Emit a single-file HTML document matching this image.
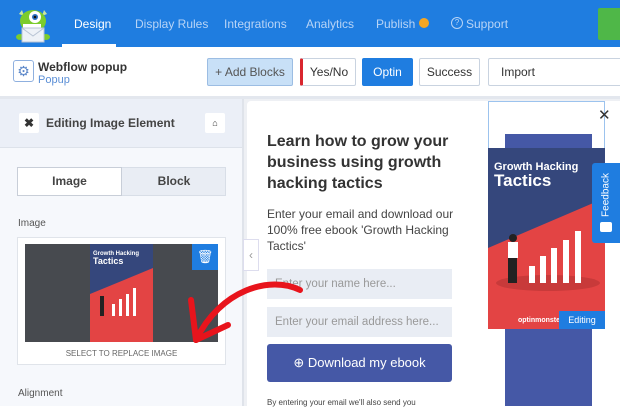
<!DOCTYPE html>
<html><head><style>
*{margin:0;padding:0;box-sizing:border-box}
body{width:620px;height:406px;overflow:hidden;font-family:"Liberation Sans",sans-serif;background:#fff;position:relative}
.a{position:absolute}
.nav{left:0;top:0;width:620px;height:47px;background:#1f7de0}
.nt{top:17px;font-size:12px;color:#b8d4f6}
.btn{top:58px;height:28px;border:1px solid #c9d3e0;border-radius:2px;font-size:12px;text-align:center;line-height:26px;color:#333;background:#fff}
</style></head><body>
<div class="a nav"></div>
<svg class="a" style="left:13px;top:4px" width="40" height="40" viewBox="0 0 40 40">
<path d="M6 10 L9 6 L11 12Z M34 10 L31 6 L29 12Z" fill="#c9e6a0"/>
<ellipse cx="20" cy="17" rx="13" ry="11" fill="#7ccc2c"/>
<circle cx="22" cy="13" r="6" fill="#fff"/><circle cx="22" cy="13" r="3" fill="#2a6fc0"/><circle cx="22" cy="13" r="1.3" fill="#111"/>
<rect x="10" y="20" width="18" height="4" fill="#fff"/>
<ellipse cx="7" cy="33" rx="4" ry="3" fill="#7ccc2c"/><ellipse cx="33" cy="33" rx="4" ry="3" fill="#7ccc2c"/>
<path d="M9 24 L31 24 L31 38 L9 38Z" fill="#eef2f7" stroke="#b8c4d4"/>
<path d="M9 24 L20 32 L31 24" fill="none" stroke="#b8c4d4"/>
</svg>
<div class="a" style="left:62px;top:44px;width:54px;height:3px;background:#fff"></div>
<div class="a nt" style="left:74px;color:#fff">Design</div>
<div class="a nt" style="left:135px">Display Rules</div>
<div class="a nt" style="left:224px">Integrations</div>
<div class="a nt" style="left:306px">Analytics</div>
<div class="a nt" style="left:376px">Publish</div>
<div class="a" style="left:419px;top:18px;width:10px;height:10px;border-radius:50%;background:#f5a623"></div>
<div class="a" style="left:451px;top:17px;width:12px;height:12px;border:1px solid #b8d4f6;border-radius:50%;font-size:8px;color:#b8d4f6;text-align:center;line-height:10px">?</div>
<div class="a nt" style="left:466px">Support</div>
<div class="a" style="left:598px;top:8px;width:22px;height:32px;background:#4fb748;border-radius:2px 0 0 2px"></div>

<div class="a" style="left:0;top:96px;width:620px;height:3px;background:#e3e7ee"></div>
<div class="a" style="left:13px;top:60px;width:21px;height:22px;border:1px solid #8fb0df;border-radius:3px;color:#5a86c8;font-size:14px;text-align:center;line-height:20px">⚙</div>
<div class="a" style="left:38px;top:60px;font-size:12px;font-weight:bold;color:#333">Webflow popup</div>
<div class="a" style="left:38px;top:74px;font-size:11px;color:#5b8fd6">Popup</div>
<div class="a btn" style="left:207px;width:86px;background:#c8e0f7;border-color:#9cbde3;color:#555">+ Add Blocks</div>
<div class="a btn" style="left:300px;width:56px;border-left:3px solid #d9262e">Yes/No</div>
<div class="a btn" style="left:362px;width:51px;background:#1f7de0;border-color:#1f7de0;color:#fff">Optin</div>
<div class="a btn" style="left:419px;width:61px">Success</div>
<div class="a btn" style="left:488px;width:140px;text-align:left;padding-left:12px">Import</div>

<div class="a" style="left:0;top:99px;width:243px;height:307px;background:#f6f8fc"></div>
<div class="a" style="left:0;top:99px;width:243px;height:49px;background:#ebeff7;border-bottom:1px solid #dde2ea"></div>
<div class="a" style="left:242px;top:99px;width:2px;height:307px;background:#dfe3ea"></div>
<div class="a" style="left:19px;top:113px;width:20px;height:20px;background:#fff;border-radius:2px;font-size:12px;font-weight:bold;text-align:center;line-height:20px;color:#333">✖</div>
<div class="a" style="left:46px;top:116px;font-size:12px;font-weight:bold;color:#444">Editing Image Element</div>
<div class="a" style="left:205px;top:113px;width:20px;height:20px;background:#fff;border-radius:2px;font-size:9px;text-align:center;line-height:20px;color:#333">⌂</div>
<div class="a" style="left:17px;top:167px;width:209px;height:29px;background:#e9edf4;border:1px solid #d8dee7"></div>
<div class="a" style="left:17px;top:167px;width:105px;height:29px;background:#fff;border:1px solid #c8ced8;font-size:12px;font-weight:bold;color:#444;text-align:center;line-height:27px">Image</div>
<div class="a" style="left:122px;top:167px;width:104px;height:29px;font-size:12px;font-weight:bold;color:#444;text-align:center;line-height:29px">Block</div>
<div class="a" style="left:18px;top:218px;font-size:10px;color:#555">Image</div>
<div class="a" style="left:17px;top:237px;width:209px;height:128px;background:#fff;border:1px solid #e0e4ea"></div>
<div class="a" style="left:25px;top:244px;width:193px;height:98px;background:#474a4f"></div>
<div class="a" style="left:90px;top:244px;width:63px;height:98px;background:#e34444"></div>
<svg class="a" style="left:90px;top:244px" width="63" height="98"><polygon points="0,0 63,0 63,24 0,50" fill="#35477c"/><text x="3" y="11" font-size="6" font-weight="bold" fill="#fff" font-family="Liberation Sans">Growth Hacking</text><text x="3" y="20" font-size="9" font-weight="bold" fill="#fff" font-family="Liberation Sans">Tactics</text><rect x="22" y="60" width="3" height="12" fill="#fff"/><rect x="29" y="55" width="3" height="17" fill="#fff"/><rect x="36" y="50" width="3" height="22" fill="#fff"/><rect x="43" y="44" width="3" height="28" fill="#fff"/><rect x="10" y="52" width="4" height="20" fill="#222"/></svg>
<div class="a" style="left:192px;top:244px;width:26px;height:26px;background:#1f7de0;color:#fff;font-size:13px;text-align:center;line-height:26px">🗑</div>
<div class="a" style="left:0;top:349px;width:243px;text-align:center;font-size:8px;color:#666">SELECT TO REPLACE IMAGE</div>
<div class="a" style="left:18px;top:388px;font-size:10px;color:#555">Alignment</div>

<div class="a" style="left:244px;top:99px;width:376px;height:307px;background:#eef0f4"></div>
<div class="a" style="left:247px;top:101px;width:373px;height:305px;background:#fff;border-radius:4px 0 0 0"></div>
<div class="a" style="left:243px;top:239px;width:16px;height:32px;background:#fff;border:1px solid #dde;color:#999;font-size:12px;line-height:30px;text-align:center">‹</div>
<div class="a" style="left:267px;top:131px;width:200px;font-size:16px;font-weight:bold;color:#333;line-height:21px">Learn how to grow your business using growth hacking tactics</div>
<div class="a" style="left:267px;top:206px;width:195px;font-size:12px;color:#444;line-height:16px">Enter your email and download our 100% free ebook 'Growth Hacking Tactics'</div>
<div class="a" style="left:267px;top:269px;width:185px;height:30px;background:#e9edf4;font-size:11.5px;color:#999;line-height:30px;padding-left:8px">Enter your name here...</div>
<div class="a" style="left:267px;top:307px;width:185px;height:30px;background:#e9edf4;font-size:11.5px;color:#999;line-height:30px;padding-left:8px">Enter your email address here...</div>
<div class="a" style="left:267px;top:344px;width:185px;height:38px;background:#4558a6;border-radius:3px;color:#fff;font-size:13px;text-align:center;line-height:38px">⊕ Download my ebook</div>
<div class="a" style="left:267px;top:398px;font-size:8px;color:#444">By entering your email we'll also send you</div>
<div class="a" style="left:505px;top:134px;width:87px;height:272px;background:#4558a6"></div>
<div class="a" style="left:488px;top:101px;width:117px;height:47px;border:1px solid #9cc3ee;border-bottom:none"></div>
<div class="a" style="left:488px;top:148px;width:117px;height:181px;background:#e34444"></div>
<svg class="a" style="left:488px;top:148px" width="117" height="181"><polygon points="0,0 117,0 117,50 0,100" fill="#35477c"/><text x="6" y="22" font-size="11" font-weight="bold" fill="#fff" font-family="Liberation Sans">Growth Hacking</text><text x="6" y="38" font-size="17" font-weight="bold" fill="#fff" font-family="Liberation Sans">Tactics</text><ellipse cx="60" cy="135" rx="52" ry="8" fill="#c83a3a"/><rect x="41" y="118" width="6" height="17" fill="#fff"/><rect x="52" y="108" width="6" height="27" fill="#fff"/><rect x="63" y="100" width="6" height="35" fill="#fff"/><rect x="75" y="92" width="6" height="43" fill="#fff"/><rect x="87" y="83" width="6" height="52" fill="#fff"/><rect x="20" y="94" width="10" height="16" fill="#fff"/><rect x="20" y="110" width="9" height="25" fill="#222"/><circle cx="25" cy="90" r="4" fill="#222"/><text x="30" y="174" font-size="7" font-weight="bold" fill="#fff" font-family="Liberation Sans">optinmonster</text></svg>
<div class="a" style="left:559px;top:311px;width:46px;height:18px;background:#1f7de0;color:#fff;font-size:9px;text-align:center;line-height:18px">Editing</div>
<div class="a" style="left:598px;top:106px;font-size:15px;color:#333">✕</div>
<div class="a" style="left:592px;top:163px;width:28px;height:80px;background:#1f7de0;border-radius:3px 0 0 3px"></div>
<div class="a" style="left:606px;top:195px;color:#fff;font-size:10px;transform:translate(-50%,-50%) rotate(-90deg);white-space:nowrap">Feedback</div>
<div class="a" style="left:600px;top:222px;width:12px;height:10px;background:#fff;border-radius:2px"></div>
<svg class="a" style="left:0;top:0" width="620" height="406"><path d="M300 290 C 270 275, 220 290, 196 340" fill="none" stroke="#e8141c" stroke-width="6" stroke-linecap="round"/><path d="M196 340 L191 300 M196 340 L228 325" fill="none" stroke="#e8141c" stroke-width="6" stroke-linecap="round"/></svg>
</body></html>
